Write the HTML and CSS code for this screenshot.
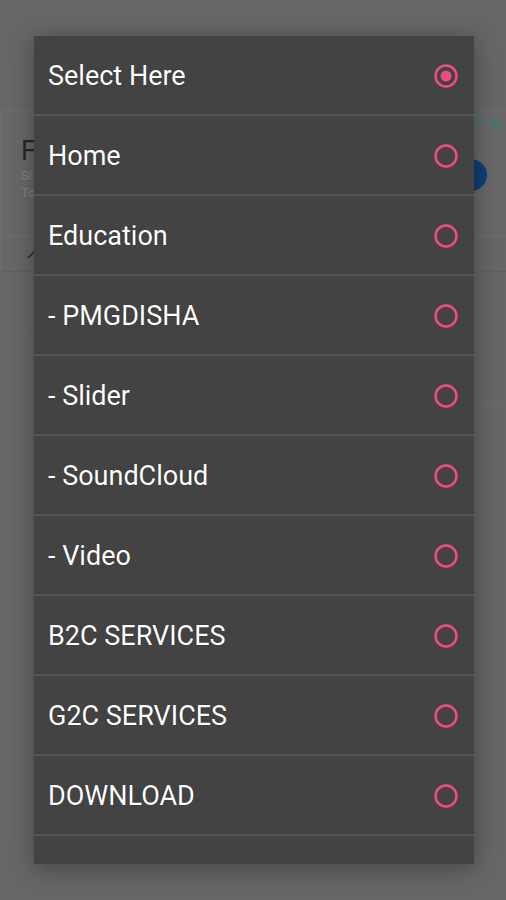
FILE: index.html
```html
<!DOCTYPE html>
<html>
<head>
<meta charset="utf-8">
<link rel="stylesheet" href="styles.css">
</head>
<body>
<div class="page">
  <div class="top-space"></div>
  <div class="ad-card">
    <div class="ad-text">
      <div class="ad-title">F</div>
      <div class="ad-sub">Si</div>
      <div class="ad-sub">To</div>
    </div>
    <div class="ad-badges"><span class="ad-info">ⓘ</span><span class="ad-x">✕</span></div>
    <div class="ad-button"></div>
  </div>
  <div class="bar-row">
    <svg class="pen" width="12" height="12" viewBox="0 0 12 12"><path d="M2 10 L9 3" stroke="#2b2b2b" stroke-width="1.6" fill="none"/></svg>
  </div>
  <div class="gap-row"></div>
  <div class="gap-row2"></div>
</div>

<div class="dialog">
  <div class="item"><span class="label">Select Here</span><svg class="radio" width="26" height="26" viewBox="0 0 26 26"><circle cx="13" cy="13" r="10.5" stroke="#f04c84" stroke-width="2.5" fill="none"/><circle cx="13" cy="13" r="5.5" fill="#f04c84"/></svg></div>
  <div class="item"><span class="label">Home</span><svg class="radio" width="26" height="26" viewBox="0 0 26 26"><circle cx="13" cy="13" r="10.5" stroke="#f04c84" stroke-width="2.5" fill="none"/></svg></div>
  <div class="item"><span class="label">Education</span><svg class="radio" width="26" height="26" viewBox="0 0 26 26"><circle cx="13" cy="13" r="10.5" stroke="#f04c84" stroke-width="2.5" fill="none"/></svg></div>
  <div class="item"><span class="label">- PMGDISHA</span><svg class="radio" width="26" height="26" viewBox="0 0 26 26"><circle cx="13" cy="13" r="10.5" stroke="#f04c84" stroke-width="2.5" fill="none"/></svg></div>
  <div class="item"><span class="label">- Slider</span><svg class="radio" width="26" height="26" viewBox="0 0 26 26"><circle cx="13" cy="13" r="10.5" stroke="#f04c84" stroke-width="2.5" fill="none"/></svg></div>
  <div class="item"><span class="label">- SoundCloud</span><svg class="radio" width="26" height="26" viewBox="0 0 26 26"><circle cx="13" cy="13" r="10.5" stroke="#f04c84" stroke-width="2.5" fill="none"/></svg></div>
  <div class="item"><span class="label">- Video</span><svg class="radio" width="26" height="26" viewBox="0 0 26 26"><circle cx="13" cy="13" r="10.5" stroke="#f04c84" stroke-width="2.5" fill="none"/></svg></div>
  <div class="item"><span class="label">B2C SERVICES</span><svg class="radio" width="26" height="26" viewBox="0 0 26 26"><circle cx="13" cy="13" r="10.5" stroke="#f04c84" stroke-width="2.5" fill="none"/></svg></div>
  <div class="item"><span class="label">G2C SERVICES</span><svg class="radio" width="26" height="26" viewBox="0 0 26 26"><circle cx="13" cy="13" r="10.5" stroke="#f04c84" stroke-width="2.5" fill="none"/></svg></div>
  <div class="item"><span class="label">DOWNLOAD</span><svg class="radio" width="26" height="26" viewBox="0 0 26 26"><circle cx="13" cy="13" r="10.5" stroke="#f04c84" stroke-width="2.5" fill="none"/></svg></div>
  <div class="item"><span class="label"></span><svg class="radio" width="26" height="26" viewBox="0 0 26 26"><circle cx="13" cy="13" r="10.5" stroke="#f04c84" stroke-width="2.5" fill="none"/></svg></div>
</div>
</body>
</html>
```
FILE: styles.css
```css
html, body {
  margin: 0;
  padding: 0;
}
body {
  width: 506px;
  height: 900px;
  overflow: hidden;
  background: #676767;
  font-family: Roboto, "Noto Sans", sans-serif;
  position: relative;
}
.page {
  display: flex;
  flex-direction: column;
}
.top-space {
  height: 110px;
}
.ad-card {
  height: 124px;
  border-top: 1px solid #6f6f6f;
  border-bottom: 1px solid #6f6f6f;
  border-left: 2px solid #6c6c6c;
  background: #686868;
  position: relative;
  display: flex;
  align-items: flex-start;
}
.ad-text {
  padding: 24px 0 0 19px;
  display: flex;
  flex-direction: column;
}
.ad-title {
  font-size: 27px;
  color: #262626;
  line-height: 32px;
}
.ad-sub {
  font-size: 13px;
  color: #858585;
  line-height: 17px;
}
.ad-badges {
  position: absolute;
  right: 4px;
  top: 3px;
  font-size: 15px;
  color: #2f7f80;
  display: flex;
  gap: 3px;
}
.ad-button {
  position: absolute;
  right: 19px;
  top: 48px;
  width: 32px;
  height: 32px;
  border-radius: 50%;
  background: #0f3f78;
}
.bar-row {
  height: 35px;
  border-bottom: 1px solid #606060;
  border-left: 2px solid #6c6c6c;
  display: flex;
  align-items: center;
  padding-left: 24px;
}
.gap-row {
  height: 60px;
  border-bottom: 1px solid #6d6d6d;
  margin-right: 480px;
}
.gap-row2 {
  height: 70px;
  border-bottom: 1px solid #6d6d6d;
  margin-left: 470px;
}
.dialog {
  position: absolute;
  left: 34px;
  top: 36px;
  width: 440px;
  height: 828px;
  overflow: hidden;
  background: #434343;
  box-shadow: 0 4px 24px rgba(0, 0, 0, 0.35);
  display: flex;
  flex-direction: column;
}
.item {
  flex: 0 0 78px;
  border-bottom: 2px solid #555555;
  display: flex;
  align-items: center;
  justify-content: space-between;
  padding: 2px 15px 0 14px;
  box-sizing: border-box;
  height: 80px;
  flex-basis: 80px;
}
.label {
  color: #ffffff;
  font-size: 27px;
  text-shadow: 0 0 1px rgba(0, 0, 0, 0.6);
}
.radio {
  display: block;
}
```
